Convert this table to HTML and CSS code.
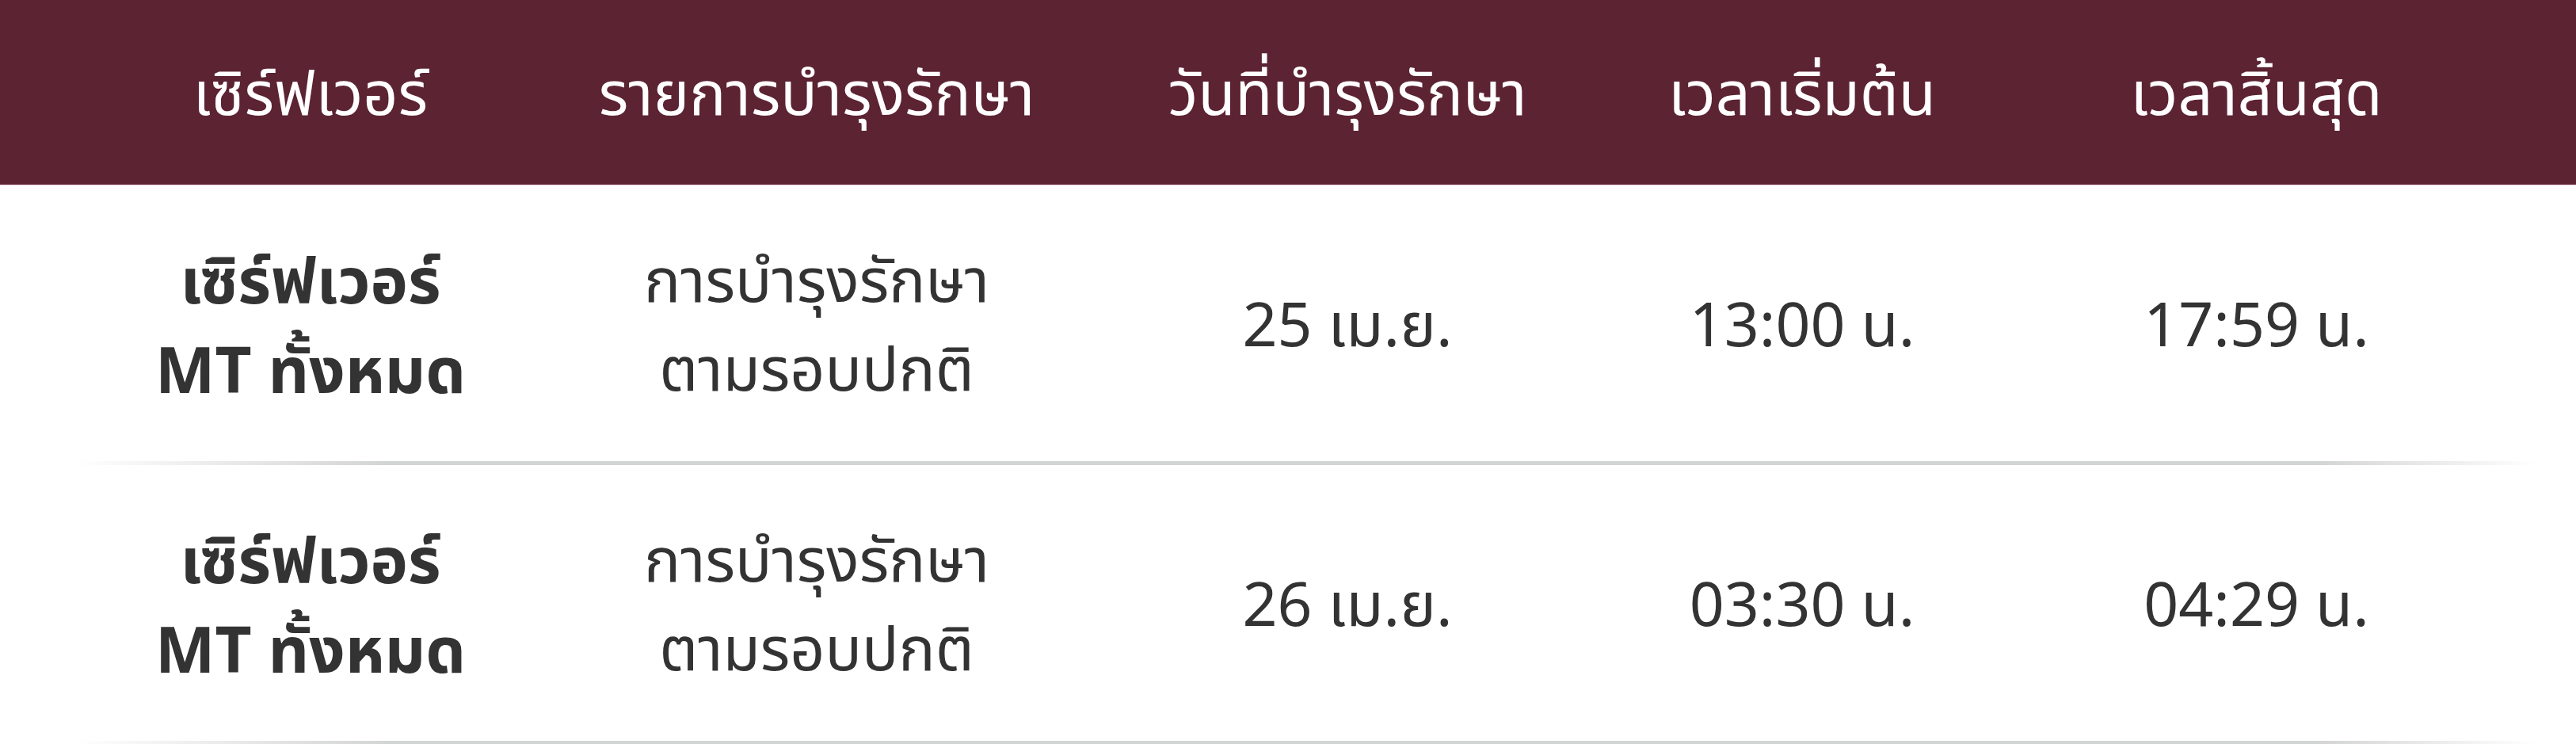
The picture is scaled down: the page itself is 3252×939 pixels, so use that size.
FILE: index.html
```html
<!DOCTYPE html>
<html lang="th">
<head>
<meta charset="utf-8">
<title>ตารางบำรุงรักษา</title>
<link rel="stylesheet" href="styles.css">
</head>
<body>
<div class="schedule">
  <div class="head">
    <div class="grid">
      <div class="cell">เซิร์ฟเวอร์</div>
      <div class="cell">รายการบำรุงรักษา</div>
      <div class="cell">วันที่บำรุงรักษา</div>
      <div class="cell">เวลาเริ่มต้น</div>
      <div class="cell">เวลาสิ้นสุด</div>
    </div>
  </div>
  <div class="row">
    <div class="grid">
      <div class="cell strong">เซิร์ฟเวอร์<br>MT ทั้งหมด</div>
      <div class="cell">การบำรุงรักษา<br>ตามรอบปกติ</div>
      <div class="cell">25 เม.ย.</div>
      <div class="cell">13:00 น.</div>
      <div class="cell">17:59 น.</div>
    </div>
    <div class="rule"></div>
  </div>
  <div class="row">
    <div class="grid">
      <div class="cell strong">เซิร์ฟเวอร์<br>MT ทั้งหมด</div>
      <div class="cell">การบำรุงรักษา<br>ตามรอบปกติ</div>
      <div class="cell">26 เม.ย.</div>
      <div class="cell">03:30 น.</div>
      <div class="cell">04:29 น.</div>
    </div>
    <div class="rule"></div>
  </div>
</div>
</body>
</html>
```
FILE: styles.css
```css
html, body {
  margin: 0;
  padding: 0;
  background: #ffffff;
}

body {
  font-family: "Noto Sans", "Noto Sans Thai", "Noto Sans Thai UI", sans-serif;
  font-size: 77px;
  color: #333333;
}

.schedule {
  width: 3252px;
}

.grid {
  display: grid;
  grid-template-columns: 558px 720px 620px 528px 619px;
  padding-left: 113px;
  align-items: center;
}

.cell {
  text-align: center;
  line-height: 112px;
  white-space: nowrap;
}

.head {
  background: #5c2333;
  color: #ffffff;
  border-bottom: 1px solid #ecd3d9;
}

.head .grid {
  height: 233px;
}

.head .cell {
  line-height: 1.2;
}

.row .grid {
  height: 348px;
}

.strong {
  font-weight: 700;
  font-size: 80px;
  line-height: 113px;
}

.rule {
  height: 5px;
  background: linear-gradient(to right,
    rgba(210, 211, 211, 0) 2.8%,
    #d3d4d4 15%,
    #d3d4d4 90%,
    rgba(210, 211, 211, 0) 98.5%);
}
```
